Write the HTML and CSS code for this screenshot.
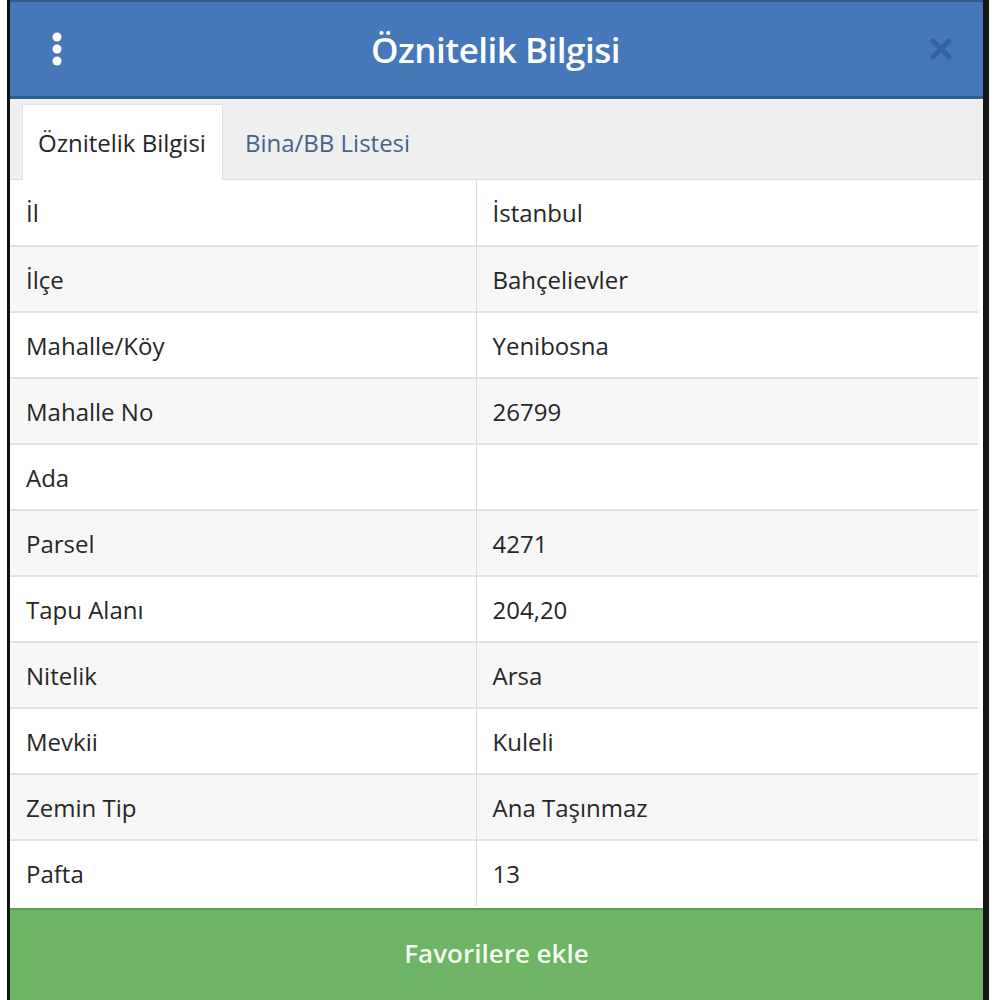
FILE: index.html
```html
<!DOCTYPE html>
<html lang="tr">
<head>
    <meta charset="UTF-8">
    <meta name="viewport" content="width=device-width, initial-scale=1.0">
    <title>Öznitelik Bilgisi</title>
    <link rel="stylesheet" href="styles.css">
</head>
<body>
    <div class="panel">
        <header class="panel-header">
            <span class="menu-btn">
                <svg width="14" height="34" viewBox="0 0 14 34">
                    <circle cx="7" cy="5" r="4.5" fill="#fff"/>
                    <circle cx="7" cy="17" r="4.5" fill="#fff"/>
                    <circle cx="7" cy="29" r="4.5" fill="#fff"/>
                </svg>
            </span>
            <h1>Öznitelik Bilgisi</h1>
            <span class="close-btn">
                <svg width="24" height="24" viewBox="0 0 24 24">
                    <path d="M4 4 L20 20 M20 4 L4 20" stroke="#32609b" stroke-width="5" stroke-linecap="round"/>
                </svg>
            </span>
        </header>
        <nav class="tabs">
            <div class="tab active">Öznitelik Bilgisi</div>
            <div class="tab">Bina/BB Listesi</div>
        </nav>
        <table class="attr-table">
            <tr><td>İl</td><td>İstanbul</td></tr>
            <tr><td>İlçe</td><td>Bahçelievler</td></tr>
            <tr><td>Mahalle/Köy</td><td>Yenibosna</td></tr>
            <tr><td>Mahalle No</td><td>26799</td></tr>
            <tr><td>Ada</td><td></td></tr>
            <tr><td>Parsel</td><td>4271</td></tr>
            <tr><td>Tapu Alanı</td><td>204,20</td></tr>
            <tr><td>Nitelik</td><td>Arsa</td></tr>
            <tr><td>Mevkii</td><td>Kuleli</td></tr>
            <tr><td>Zemin Tip</td><td>Ana Taşınmaz</td></tr>
            <tr><td>Pafta</td><td>13</td></tr>
        </table>
        <button class="fav-btn">Favorilere ekle</button>
    </div>
</body>
</html>
```

FILE: styles.css
```css
body {
    margin: 0;
    padding: 0;
    background: #fff;
    font-family: "Open Sans", Arial, sans-serif;
    color: #262626;
}
.panel {
    margin-left: 7px;
    width: 973px;
    height: 1000px;
    border-left: 3px solid #111;
    border-right: 6px solid #161616;
    background: #fff;
    display: flex;
    flex-direction: column;
    overflow: hidden;
}
.panel-header {
    height: 94px;
    background: #4677b8;
    border-top: 2px solid #36598a;
    border-bottom: 3px solid #2f5b8e;
    display: flex;
    align-items: center;
    padding: 0 30px 0 40px;
}
.menu-btn {
    display: flex;
    width: 40px;
}
.panel-header h1 {
    flex: 1;
    margin: 0 0 0 -12px;
    text-align: center;
    color: #fff;
    font-size: 35px;
    font-weight: 600;
    letter-spacing: -0.5px;
}
.close-btn {
    display: flex;
    width: 40px;
    justify-content: flex-end;
    opacity: 0.85;
}
.tabs {
    display: flex;
    align-items: flex-end;
    background: #efefef;
    height: 81px;
    padding-left: 12px;
    border-bottom: 1px solid #dcdcdc;
    box-sizing: border-box;
}
.tab {
    height: 74px;
    display: flex;
    align-items: center;
    padding: 0 16px 0 15px;
    font-size: 24px;
    color: #44648c;
}
.tab.active {
    background: #fff;
    color: #262626;
    border: 1px solid #e2e2e2;
    border-bottom: none;
    margin-bottom: -1px;
    height: 75px;
}
.tab + .tab {
    padding-left: 22px;
}
.attr-table {
    width: 968px;
    border-collapse: collapse;
    font-size: 24px;
}
.attr-table td {
    height: 66px;
    padding: 0 16px;
    border-bottom: 2px solid #e2e2e2;
    box-sizing: border-box;
}
.attr-table td:first-child {
    width: 466px;
    border-right: 1px solid #dcdcdc;
}
.attr-table tr:nth-child(even) td {
    background: #f7f7f7;
}
.attr-table tr:last-child td {
    border-bottom: none;
}
.fav-btn {
    flex: 1;
    margin-top: 2px;
    border: none;
    border-top: 2px solid #5c9d55;
    background: #6db465;
    color: #f4fbef;
    font-family: "Open Sans", Arial, sans-serif;
    font-size: 26px;
    font-weight: 600;
    padding-bottom: 6px;
    cursor: pointer;
}
```
